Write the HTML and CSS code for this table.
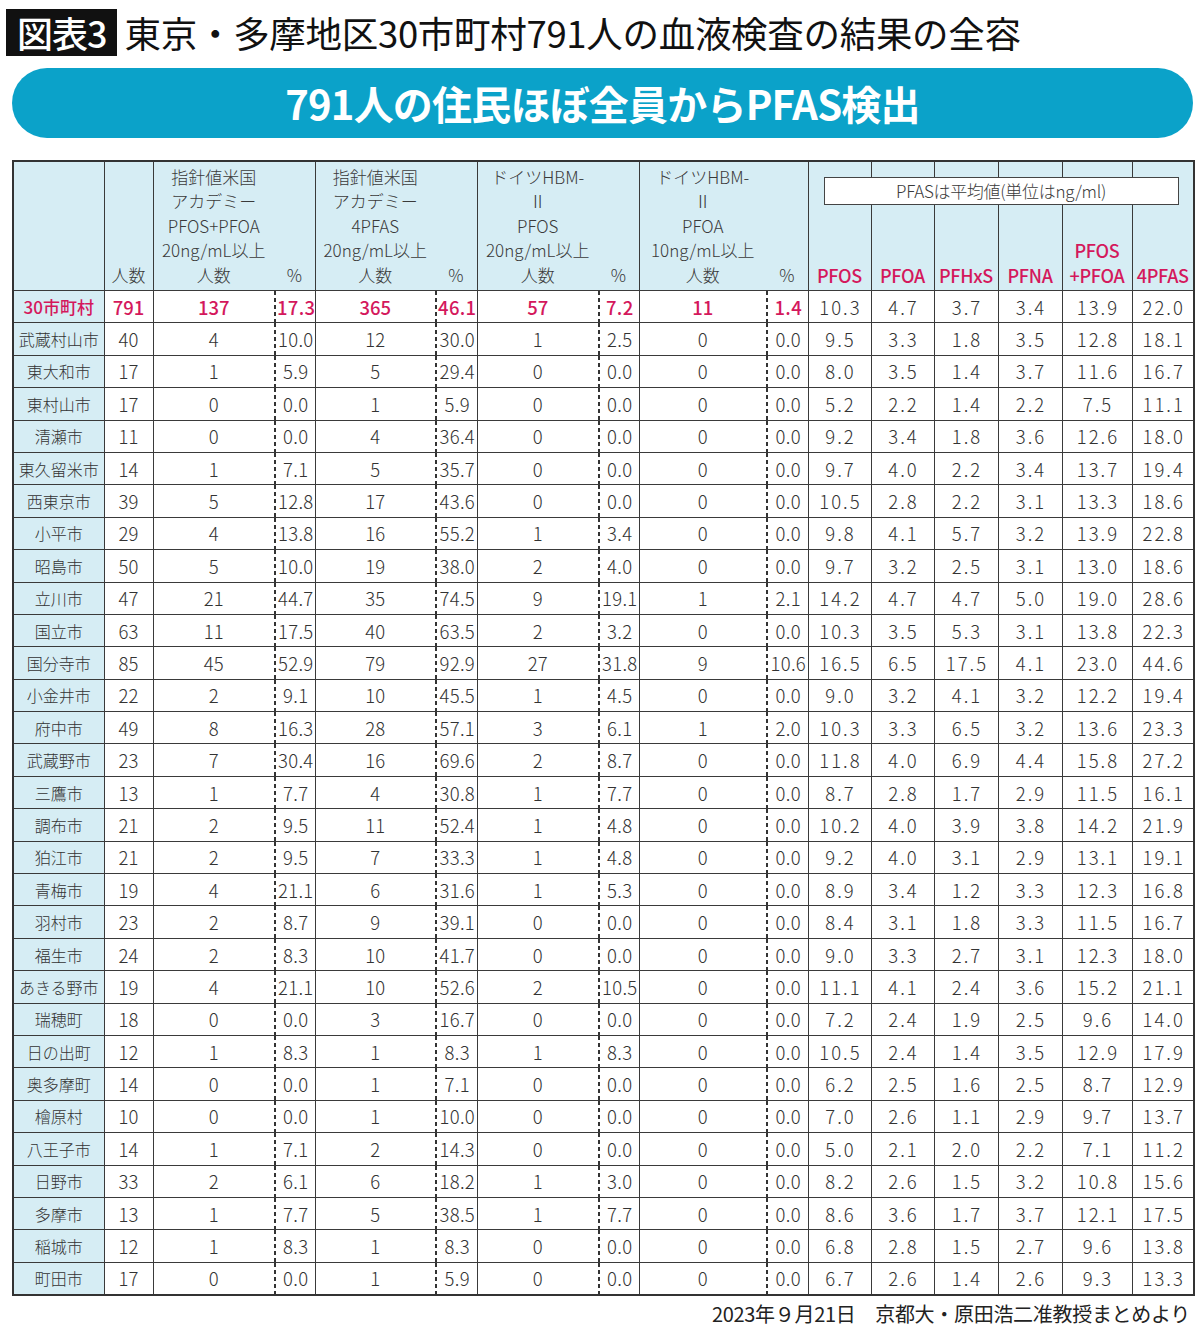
FILE: index.html
```html
<!DOCTYPE html>
<html lang="ja">
<head>
<meta charset="utf-8">
<link rel="stylesheet" href="styles.css">
</head>
<body>
<div class="page">
  <div class="title">
    <span class="tag">図表3</span>
    <h1 class="title-text">東京・多摩地区30市町村791人の血液検査の結果の全容</h1>
  </div>
  <div class="banner">791人の住民ほぼ全員からPFAS検出</div>
  <table class="data">
    <colgroup>
      <col style="width:91px"><col style="width:49px">
      <col style="width:121px"><col style="width:41px">
      <col style="width:120px"><col style="width:42px">
      <col style="width:121px"><col style="width:41px">
      <col style="width:127px"><col style="width:42px">
      <col style="width:63px"><col style="width:63px"><col style="width:64px"><col style="width:64px"><col style="width:70px"><col style="width:62px">
    </colgroup>
    <thead>
      <tr>
        <th class="h"></th>
        <th class="h">人数</th>
        <th class="h">指針値米国<br>アカデミー<br>PFOS+PFOA<br>20ng/mL以上<br>人数</th>
        <th class="h hp">%</th>
        <th class="h">指針値米国<br>アカデミー<br>4PFAS<br>20ng/mL以上<br>人数</th>
        <th class="h hp">%</th>
        <th class="h">ドイツHBM-<br>Ⅱ<br>PFOS<br>20ng/mL以上<br>人数</th>
        <th class="h hp">%</th>
        <th class="h">ドイツHBM-<br>Ⅱ<br>PFOA<br>10ng/mL以上<br>人数</th>
        <th class="h hp">%</th>
        <th class="h hv box-anchor"><div class="unit-box">PFASは平均値(単位はng/ml)</div>PFOS</th>
        <th class="h hv">PFOA</th>
        <th class="h hv">PFHxS</th>
        <th class="h hv">PFNA</th>
        <th class="h hv">PFOS<br>+PFOA</th>
        <th class="h hv">4PFAS</th>
      </tr>
    </thead>
    <tbody>
      <tr class="total"><td class="nm">30市町村</td><td>791</td><td>137</td><td class="p">17.3</td><td>365</td><td class="p">46.1</td><td>57</td><td class="p">7.2</td><td>11</td><td class="p">1.4</td><td class="v">10.3</td><td class="v">4.7</td><td class="v">3.7</td><td class="v">3.4</td><td class="v">13.9</td><td class="v">22.0</td></tr>
      <tr><td class="nm">武蔵村山市</td><td>40</td><td>4</td><td class="p">10.0</td><td>12</td><td class="p">30.0</td><td>1</td><td class="p">2.5</td><td>0</td><td class="p">0.0</td><td class="v">9.5</td><td class="v">3.3</td><td class="v">1.8</td><td class="v">3.5</td><td class="v">12.8</td><td class="v">18.1</td></tr>
      <tr><td class="nm">東大和市</td><td>17</td><td>1</td><td class="p">5.9</td><td>5</td><td class="p">29.4</td><td>0</td><td class="p">0.0</td><td>0</td><td class="p">0.0</td><td class="v">8.0</td><td class="v">3.5</td><td class="v">1.4</td><td class="v">3.7</td><td class="v">11.6</td><td class="v">16.7</td></tr>
      <tr><td class="nm">東村山市</td><td>17</td><td>0</td><td class="p">0.0</td><td>1</td><td class="p">5.9</td><td>0</td><td class="p">0.0</td><td>0</td><td class="p">0.0</td><td class="v">5.2</td><td class="v">2.2</td><td class="v">1.4</td><td class="v">2.2</td><td class="v">7.5</td><td class="v">11.1</td></tr>
      <tr><td class="nm">清瀬市</td><td>11</td><td>0</td><td class="p">0.0</td><td>4</td><td class="p">36.4</td><td>0</td><td class="p">0.0</td><td>0</td><td class="p">0.0</td><td class="v">9.2</td><td class="v">3.4</td><td class="v">1.8</td><td class="v">3.6</td><td class="v">12.6</td><td class="v">18.0</td></tr>
      <tr><td class="nm">東久留米市</td><td>14</td><td>1</td><td class="p">7.1</td><td>5</td><td class="p">35.7</td><td>0</td><td class="p">0.0</td><td>0</td><td class="p">0.0</td><td class="v">9.7</td><td class="v">4.0</td><td class="v">2.2</td><td class="v">3.4</td><td class="v">13.7</td><td class="v">19.4</td></tr>
      <tr><td class="nm">西東京市</td><td>39</td><td>5</td><td class="p">12.8</td><td>17</td><td class="p">43.6</td><td>0</td><td class="p">0.0</td><td>0</td><td class="p">0.0</td><td class="v">10.5</td><td class="v">2.8</td><td class="v">2.2</td><td class="v">3.1</td><td class="v">13.3</td><td class="v">18.6</td></tr>
      <tr><td class="nm">小平市</td><td>29</td><td>4</td><td class="p">13.8</td><td>16</td><td class="p">55.2</td><td>1</td><td class="p">3.4</td><td>0</td><td class="p">0.0</td><td class="v">9.8</td><td class="v">4.1</td><td class="v">5.7</td><td class="v">3.2</td><td class="v">13.9</td><td class="v">22.8</td></tr>
      <tr><td class="nm">昭島市</td><td>50</td><td>5</td><td class="p">10.0</td><td>19</td><td class="p">38.0</td><td>2</td><td class="p">4.0</td><td>0</td><td class="p">0.0</td><td class="v">9.7</td><td class="v">3.2</td><td class="v">2.5</td><td class="v">3.1</td><td class="v">13.0</td><td class="v">18.6</td></tr>
      <tr><td class="nm">立川市</td><td>47</td><td>21</td><td class="p">44.7</td><td>35</td><td class="p">74.5</td><td>9</td><td class="p">19.1</td><td>1</td><td class="p">2.1</td><td class="v">14.2</td><td class="v">4.7</td><td class="v">4.7</td><td class="v">5.0</td><td class="v">19.0</td><td class="v">28.6</td></tr>
      <tr><td class="nm">国立市</td><td>63</td><td>11</td><td class="p">17.5</td><td>40</td><td class="p">63.5</td><td>2</td><td class="p">3.2</td><td>0</td><td class="p">0.0</td><td class="v">10.3</td><td class="v">3.5</td><td class="v">5.3</td><td class="v">3.1</td><td class="v">13.8</td><td class="v">22.3</td></tr>
      <tr><td class="nm">国分寺市</td><td>85</td><td>45</td><td class="p">52.9</td><td>79</td><td class="p">92.9</td><td>27</td><td class="p">31.8</td><td>9</td><td class="p">10.6</td><td class="v">16.5</td><td class="v">6.5</td><td class="v">17.5</td><td class="v">4.1</td><td class="v">23.0</td><td class="v">44.6</td></tr>
      <tr><td class="nm">小金井市</td><td>22</td><td>2</td><td class="p">9.1</td><td>10</td><td class="p">45.5</td><td>1</td><td class="p">4.5</td><td>0</td><td class="p">0.0</td><td class="v">9.0</td><td class="v">3.2</td><td class="v">4.1</td><td class="v">3.2</td><td class="v">12.2</td><td class="v">19.4</td></tr>
      <tr><td class="nm">府中市</td><td>49</td><td>8</td><td class="p">16.3</td><td>28</td><td class="p">57.1</td><td>3</td><td class="p">6.1</td><td>1</td><td class="p">2.0</td><td class="v">10.3</td><td class="v">3.3</td><td class="v">6.5</td><td class="v">3.2</td><td class="v">13.6</td><td class="v">23.3</td></tr>
      <tr><td class="nm">武蔵野市</td><td>23</td><td>7</td><td class="p">30.4</td><td>16</td><td class="p">69.6</td><td>2</td><td class="p">8.7</td><td>0</td><td class="p">0.0</td><td class="v">11.8</td><td class="v">4.0</td><td class="v">6.9</td><td class="v">4.4</td><td class="v">15.8</td><td class="v">27.2</td></tr>
      <tr><td class="nm">三鷹市</td><td>13</td><td>1</td><td class="p">7.7</td><td>4</td><td class="p">30.8</td><td>1</td><td class="p">7.7</td><td>0</td><td class="p">0.0</td><td class="v">8.7</td><td class="v">2.8</td><td class="v">1.7</td><td class="v">2.9</td><td class="v">11.5</td><td class="v">16.1</td></tr>
      <tr><td class="nm">調布市</td><td>21</td><td>2</td><td class="p">9.5</td><td>11</td><td class="p">52.4</td><td>1</td><td class="p">4.8</td><td>0</td><td class="p">0.0</td><td class="v">10.2</td><td class="v">4.0</td><td class="v">3.9</td><td class="v">3.8</td><td class="v">14.2</td><td class="v">21.9</td></tr>
      <tr><td class="nm">狛江市</td><td>21</td><td>2</td><td class="p">9.5</td><td>7</td><td class="p">33.3</td><td>1</td><td class="p">4.8</td><td>0</td><td class="p">0.0</td><td class="v">9.2</td><td class="v">4.0</td><td class="v">3.1</td><td class="v">2.9</td><td class="v">13.1</td><td class="v">19.1</td></tr>
      <tr><td class="nm">青梅市</td><td>19</td><td>4</td><td class="p">21.1</td><td>6</td><td class="p">31.6</td><td>1</td><td class="p">5.3</td><td>0</td><td class="p">0.0</td><td class="v">8.9</td><td class="v">3.4</td><td class="v">1.2</td><td class="v">3.3</td><td class="v">12.3</td><td class="v">16.8</td></tr>
      <tr><td class="nm">羽村市</td><td>23</td><td>2</td><td class="p">8.7</td><td>9</td><td class="p">39.1</td><td>0</td><td class="p">0.0</td><td>0</td><td class="p">0.0</td><td class="v">8.4</td><td class="v">3.1</td><td class="v">1.8</td><td class="v">3.3</td><td class="v">11.5</td><td class="v">16.7</td></tr>
      <tr><td class="nm">福生市</td><td>24</td><td>2</td><td class="p">8.3</td><td>10</td><td class="p">41.7</td><td>0</td><td class="p">0.0</td><td>0</td><td class="p">0.0</td><td class="v">9.0</td><td class="v">3.3</td><td class="v">2.7</td><td class="v">3.1</td><td class="v">12.3</td><td class="v">18.0</td></tr>
      <tr><td class="nm">あきる野市</td><td>19</td><td>4</td><td class="p">21.1</td><td>10</td><td class="p">52.6</td><td>2</td><td class="p">10.5</td><td>0</td><td class="p">0.0</td><td class="v">11.1</td><td class="v">4.1</td><td class="v">2.4</td><td class="v">3.6</td><td class="v">15.2</td><td class="v">21.1</td></tr>
      <tr><td class="nm">瑞穂町</td><td>18</td><td>0</td><td class="p">0.0</td><td>3</td><td class="p">16.7</td><td>0</td><td class="p">0.0</td><td>0</td><td class="p">0.0</td><td class="v">7.2</td><td class="v">2.4</td><td class="v">1.9</td><td class="v">2.5</td><td class="v">9.6</td><td class="v">14.0</td></tr>
      <tr><td class="nm">日の出町</td><td>12</td><td>1</td><td class="p">8.3</td><td>1</td><td class="p">8.3</td><td>1</td><td class="p">8.3</td><td>0</td><td class="p">0.0</td><td class="v">10.5</td><td class="v">2.4</td><td class="v">1.4</td><td class="v">3.5</td><td class="v">12.9</td><td class="v">17.9</td></tr>
      <tr><td class="nm">奥多摩町</td><td>14</td><td>0</td><td class="p">0.0</td><td>1</td><td class="p">7.1</td><td>0</td><td class="p">0.0</td><td>0</td><td class="p">0.0</td><td class="v">6.2</td><td class="v">2.5</td><td class="v">1.6</td><td class="v">2.5</td><td class="v">8.7</td><td class="v">12.9</td></tr>
      <tr><td class="nm">檜原村</td><td>10</td><td>0</td><td class="p">0.0</td><td>1</td><td class="p">10.0</td><td>0</td><td class="p">0.0</td><td>0</td><td class="p">0.0</td><td class="v">7.0</td><td class="v">2.6</td><td class="v">1.1</td><td class="v">2.9</td><td class="v">9.7</td><td class="v">13.7</td></tr>
      <tr><td class="nm">八王子市</td><td>14</td><td>1</td><td class="p">7.1</td><td>2</td><td class="p">14.3</td><td>0</td><td class="p">0.0</td><td>0</td><td class="p">0.0</td><td class="v">5.0</td><td class="v">2.1</td><td class="v">2.0</td><td class="v">2.2</td><td class="v">7.1</td><td class="v">11.2</td></tr>
      <tr><td class="nm">日野市</td><td>33</td><td>2</td><td class="p">6.1</td><td>6</td><td class="p">18.2</td><td>1</td><td class="p">3.0</td><td>0</td><td class="p">0.0</td><td class="v">8.2</td><td class="v">2.6</td><td class="v">1.5</td><td class="v">3.2</td><td class="v">10.8</td><td class="v">15.6</td></tr>
      <tr><td class="nm">多摩市</td><td>13</td><td>1</td><td class="p">7.7</td><td>5</td><td class="p">38.5</td><td>1</td><td class="p">7.7</td><td>0</td><td class="p">0.0</td><td class="v">8.6</td><td class="v">3.6</td><td class="v">1.7</td><td class="v">3.7</td><td class="v">12.1</td><td class="v">17.5</td></tr>
      <tr><td class="nm">稲城市</td><td>12</td><td>1</td><td class="p">8.3</td><td>1</td><td class="p">8.3</td><td>0</td><td class="p">0.0</td><td>0</td><td class="p">0.0</td><td class="v">6.8</td><td class="v">2.8</td><td class="v">1.5</td><td class="v">2.7</td><td class="v">9.6</td><td class="v">13.8</td></tr>
      <tr><td class="nm">町田市</td><td>17</td><td>0</td><td class="p">0.0</td><td>1</td><td class="p">5.9</td><td>0</td><td class="p">0.0</td><td>0</td><td class="p">0.0</td><td class="v">6.7</td><td class="v">2.6</td><td class="v">1.4</td><td class="v">2.6</td><td class="v">9.3</td><td class="v">13.3</td></tr>
    </tbody>
  </table>
  <p class="source">2023年９月21日　京都大・原田浩二准教授まとめより</p>
</div>
</body>
</html>
```

FILE: styles.css
```css
html, body {
  margin: 0;
  padding: 0;
  background: #ffffff;
}

body {
  font-family: "Noto Sans CJK JP", "Noto Sans", sans-serif;
  color: #333333;
}

.page {
  width: 1200px;
  height: 1335px;
  overflow: hidden;
}

.title {
  display: flex;
  align-items: center;
  margin: 9px 0 0 6px;
  height: 47px;
}

.tag {
  display: block;
  background: #111111;
  color: #ffffff;
  font-size: 36px;
  font-weight: 500;
  line-height: 47px;
  height: 47px;
  padding: 0 10px 0 11px;
  letter-spacing: -1px;
}

.title-text {
  margin: 0 0 0 8px;
  font-size: 36.5px;
  font-weight: 400;
  line-height: 47px;
  color: #111111;
  letter-spacing: -0.3px;
}

.banner {
  margin: 12px 7px 0 12px;
  height: 70px;
  border-radius: 35px;
  background: #0ba2c9;
  color: #ffffff;
  font-size: 40px;
  font-weight: 600;
  line-height: 70px;
  text-align: center;
  letter-spacing: -0.8px;
}

.data {
  margin: 22px 0 0 12px;
  width: 1181px;
  table-layout: fixed;
  border-collapse: collapse;
  border: 2px solid #333333;
}

.data th,
.data td {
  border: 1.5px solid #3a3a3a;
  padding: 0;
  text-align: center;
  white-space: nowrap;
}

.data th {
  height: 125px;
  vertical-align: bottom;
  background: #d6edf4;
  font-size: 17px;
  font-weight: 300;
  line-height: 24.5px;
  padding-bottom: 3px;
  color: #3a3a3a;
}

.data th.hp {
  border-left-style: hidden;
}

.data th.hv {
  color: #d4185c;
  font-size: 18px;
  font-weight: 500;
  letter-spacing: -0.3px;
}

.box-anchor {
  position: relative;
}

.unit-box {
  position: absolute;
  left: 15px;
  top: 15px;
  width: 353px;
  height: 26px;
  border: 1.5px solid #444444;
  background: #ffffff;
  color: #3a3a3a;
  font-size: 17px;
  font-weight: 300;
  line-height: 26px;
  letter-spacing: -0.3px;
  text-align: center;
}

.data td {
  height: 31.4px;
  font-size: 18.5px;
  font-weight: 300;
  line-height: 20px;
  color: #333333;
  background: #ffffff;
}

.data td.nm {
  background: #d6edf4;
  font-size: 16px;
  letter-spacing: 0;
}

.data tr.total td.nm {
  font-size: 17px;
}

.data td.p {
  border-left-style: hidden;
  background-image: repeating-linear-gradient(to bottom, #333333 0, #333333 4px, transparent 4px, transparent 7px);
  background-size: 2px 100%;
  background-repeat: no-repeat;
  background-position: left top;
  letter-spacing: 0.3px;
  padding-left: 3px;
}

.data td.v {
  letter-spacing: 2px;
  padding-left: 2px;
}

.data tr.total td {
  color: #d4185c;
  font-weight: 500;
}

.data tr.total td.v {
  color: #333333;
  font-weight: 300;
}

.source {
  margin: 6px 10px 0 0;
  text-align: right;
  font-size: 20px;
  line-height: 24px;
  color: #222222;
  letter-spacing: -0.3px;
}
```
